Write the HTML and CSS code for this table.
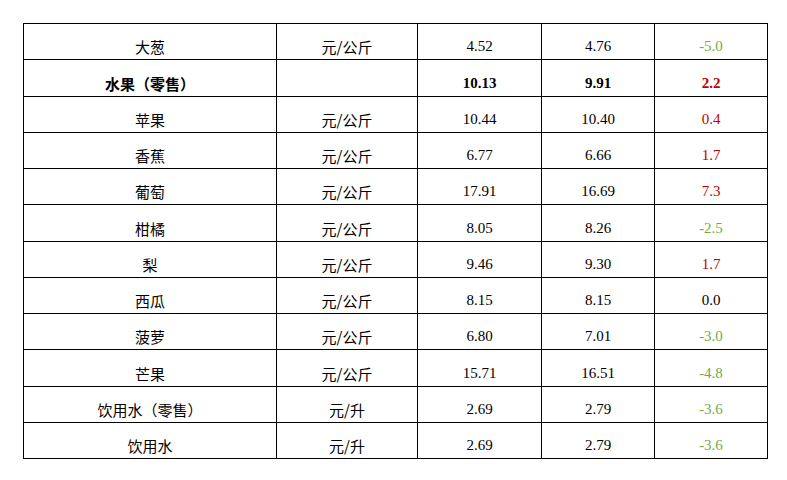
FILE: index.html
```html
<!DOCTYPE html>
<html lang="zh">
<head>
<meta charset="utf-8">
<link rel="stylesheet" href="styles.css">
</head>
<body>
<table class="price-table">
<colgroup>
<col class="c-name"><col class="c-unit"><col class="c-num"><col class="c-num2"><col class="c-chg">
</colgroup>
<tbody>
<tr><td class="cjk">大葱</td><td class="cjk">元/公斤</td><td>4.52</td><td>4.76</td><td class="down">-5.0</td></tr>
<tr class="group"><td class="cjk">水果（零售）</td><td class="cjk"></td><td>10.13</td><td>9.91</td><td class="up">2.2</td></tr>
<tr><td class="cjk">苹果</td><td class="cjk">元/公斤</td><td>10.44</td><td>10.40</td><td class="up">0.4</td></tr>
<tr><td class="cjk">香蕉</td><td class="cjk">元/公斤</td><td>6.77</td><td>6.66</td><td class="up">1.7</td></tr>
<tr><td class="cjk">葡萄</td><td class="cjk">元/公斤</td><td>17.91</td><td>16.69</td><td class="up">7.3</td></tr>
<tr><td class="cjk">柑橘</td><td class="cjk">元/公斤</td><td>8.05</td><td>8.26</td><td class="down">-2.5</td></tr>
<tr><td class="cjk">梨</td><td class="cjk">元/公斤</td><td>9.46</td><td>9.30</td><td class="up">1.7</td></tr>
<tr><td class="cjk">西瓜</td><td class="cjk">元/公斤</td><td>8.15</td><td>8.15</td><td>0.0</td></tr>
<tr><td class="cjk">菠萝</td><td class="cjk">元/公斤</td><td>6.80</td><td>7.01</td><td class="down">-3.0</td></tr>
<tr><td class="cjk">芒果</td><td class="cjk">元/公斤</td><td>15.71</td><td>16.51</td><td class="down">-4.8</td></tr>
<tr><td class="cjk">饮用水（零售）</td><td class="cjk">元/升</td><td>2.69</td><td>2.79</td><td class="down">-3.6</td></tr>
<tr><td class="cjk">饮用水</td><td class="cjk">元/升</td><td>2.69</td><td>2.79</td><td class="down">-3.6</td></tr>
</tbody>
</table>
</body>
</html>
```
FILE: styles.css
```css
html, body {
  margin: 0;
  background: #ffffff;
}
body {
  padding: 23px 0 0 23px;
}
.price-table {
  border-collapse: collapse;
  table-layout: fixed;
  width: 745px;
  font-family: "Liberation Serif", "Times New Roman", serif;
  font-size: 15px;
  color: #000000;
}
.c-name { width: 253px; }
.c-unit { width: 141px; }
.c-num { width: 124px; }
.c-num2 { width: 113px; }
.c-chg { width: 113px; }
.price-table tr {
  height: 36.25px;
}
.price-table td {
  border: 1px solid #000000;
  text-align: center;
  vertical-align: bottom;
  padding: 0 2px 4px;
  line-height: 17px;
  white-space: nowrap;
}
.price-table td.cjk {
  font-family: "Noto Sans CJK SC", "Liberation Sans", sans-serif;
  padding-bottom: 4px;
}
.group td {
  font-weight: bold;
}
.up { color: #c00000; }
.down { color: #70ad47; }
```
